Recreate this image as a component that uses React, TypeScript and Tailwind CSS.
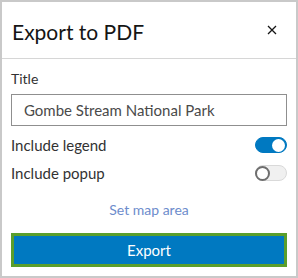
export default function App() {
  return (
    <div
      className="w-[298px] h-[278px] border-2 border-[#c9c9c9] bg-white flex flex-col"
      style={{ fontFamily: 'Lato, "Noto Sans", sans-serif' }}
    >
      {/* Header */}
      <div className="h-[57px] shrink-0 flex items-center justify-between pl-[10px] pr-[14px] border-b border-[#d6d6d6]">
        <h2 className="text-[21px] leading-none text-[#151515] pt-[3px]">Export to PDF</h2>
        <button className="w-5 h-5 flex items-center justify-center text-[#151515]">
          <svg className="w-[10px] h-[10px]" viewBox="0 0 10 10" fill="none" stroke="currentColor" strokeWidth={1.3}>
            <path d="M1 1l8 8M9 1L1 9" />
          </svg>
        </button>
      </div>

      {/* Content */}
      <div className="flex flex-col px-[9px]">
        <label className="mt-[11px] text-[14px] leading-[18px] text-[#323232]">Title</label>
        <div className="mt-[6px] h-[32px] border border-[#8f8f8f] flex items-center px-[12px] text-[15px] text-[#4a4a4a]">
          Gombe Stream National Park
        </div>

        <div className="mt-[9px] h-[20px] flex items-center justify-between">
          <span className="text-[15px] text-[#323232]">Include legend</span>
          <div className="w-[32px] h-[16px] rounded-full bg-[#0079c1] border border-[#0079c1] flex items-center justify-end pr-[1px]">
            <div className="w-[13px] h-[13px] rounded-full bg-white" />
          </div>
        </div>

        <div className="mt-[8px] h-[20px] flex items-center justify-between">
          <span className="text-[15px] text-[#323232]">Include popup</span>
          <div className="w-[32px] h-[16px] rounded-full bg-[#f0f0f0] border border-[#d9d9d9] flex items-center">
            <div className="w-[15px] h-[15px] -ml-px rounded-full bg-white border-2 border-[#6e6e6e]" />
          </div>
        </div>

        <div className="mt-[18px] text-center text-[14px] leading-[18px] text-[#6d8ccc]">Set map area</div>

        <button className="mt-[14px] h-[34px] border-[3px] border-[#5a9e2c] bg-[#0079c1] text-white text-[15px] flex items-center justify-center">
          Export
        </button>
      </div>
    </div>
  );
}
